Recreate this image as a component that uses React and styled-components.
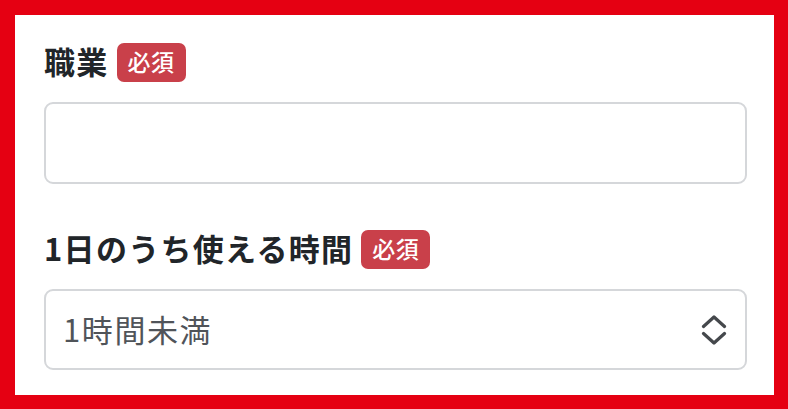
import React from "react";
import styled, { createGlobalStyle } from "styled-components";

const Global = createGlobalStyle`
  html, body { margin: 0; padding: 0; background: #fff; }
  * { box-sizing: border-box; }
`;

const Frame = styled.div`
  width: 788px;
  height: 409px;
  border-style: solid;
  border-color: #e50012;
  border-width: 15px 14px 14px 15px;
  background: #fff;
  padding: 28px 27px 0 29px;
  font-family: "Noto Sans CJK JP", "Noto Sans", sans-serif;
  display: flex;
  flex-direction: column;
`;

const Field = styled.div`
  display: flex;
  flex-direction: column;
  gap: 20px;
  margin-bottom: ${(p) => p.$mb || 0}px;
`;

const LabelRow = styled.div`
  display: flex;
  align-items: center;
  gap: 8px;
  height: 39px;
`;

const Label = styled.span`
  font-size: 31px;
  font-weight: 700;
  color: #212529;
  line-height: 1;
  letter-spacing: 1.3px;
  margin-bottom: 4px;
`;

const Badge = styled.span`
  background: #c9404a;
  color: #fff;
  font-size: 23px;
  font-weight: 500;
  line-height: 1;
  letter-spacing: 0.5px;
  padding: 7px 11px 9px;
  border-radius: 7px;
`;

const TextInput = styled.div`
  height: 82px;
  border: 2px solid #d5d7da;
  border-radius: 9px;
  background: #fff;
`;

const Select = styled.div`
  height: 81px;
  border: 2px solid #d5d7da;
  border-radius: 9px;
  background: #fff;
  display: flex;
  align-items: center;
  justify-content: space-between;
  padding: 0 18px 0 17px;
`;

const SelectValue = styled.span`
  font-size: 31px;
  letter-spacing: 1.6px;
  color: #505459;
  line-height: 1;
  margin-bottom: 2px;
`;

const Chevrons = () => (
  <svg width="26" height="30" viewBox="0 0 26 30" fill="none">
    <path d="M2.5 11.5 L13 2 L23.5 11.5" stroke="#45484c" strokeWidth="3.2" strokeLinecap="round" strokeLinejoin="round" />
    <path d="M2.5 18.5 L13 28 L23.5 18.5" stroke="#45484c" strokeWidth="3.2" strokeLinecap="round" strokeLinejoin="round" />
  </svg>
);

export default function App() {
  return (
    <>
      <Global />
      <Frame>
        <Field $mb={46}>
          <LabelRow>
            <Label>職業</Label>
            <Badge>必須</Badge>
          </LabelRow>
          <TextInput />
        </Field>
        <Field>
          <LabelRow>
            <Label>1日のうち使える時間</Label>
            <Badge>必須</Badge>
          </LabelRow>
          <Select>
            <SelectValue>1時間未満</SelectValue>
            <Chevrons />
          </Select>
        </Field>
      </Frame>
    </>
  );
}
